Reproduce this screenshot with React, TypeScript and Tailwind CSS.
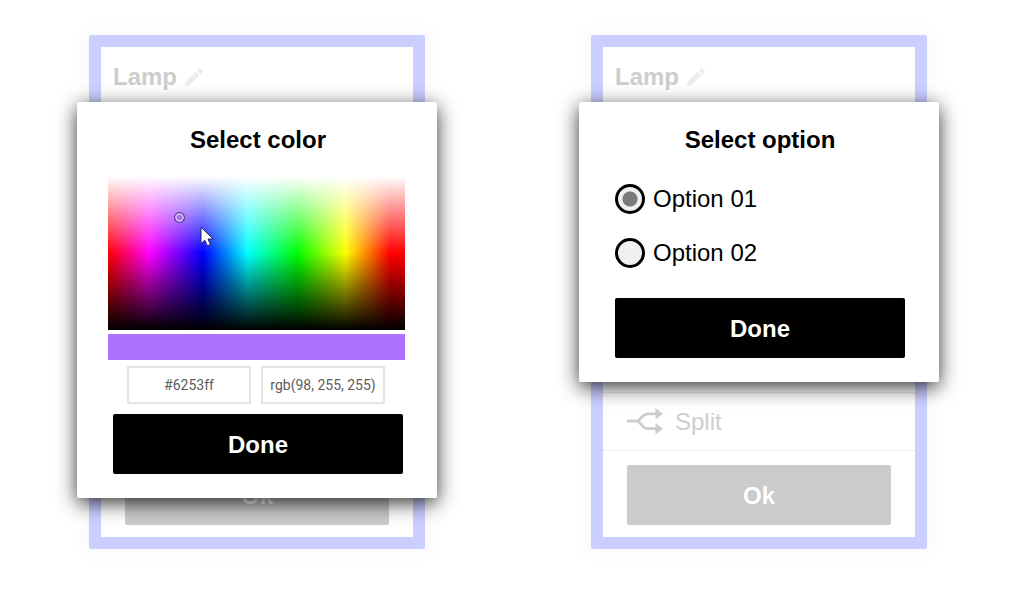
import { useState } from "react";
import type { ReactNode } from "react";

function PencilIcon() {
  return (
    <svg className="size-[18px]" viewBox="0 0 18 18" aria-hidden="true" fill="currentColor">
      <path d="M0.2 17.8V14.2L10.8 3.6L14.4 7.2L3.8 17.8Z" />
      <path d="M11.8 2.6L14 0.5Q14.7 -0.1 15.4 0.5L17.5 2.6Q18.1 3.3 17.5 4L15.4 6.2Z" />
    </svg>
  );
}

function SplitIcon() {
  return (
    <svg className="h-[27px] w-9 shrink-0" viewBox="0 0 36 27" aria-hidden="true">
      <path
        d="M0 13H11M10.5 13C14 11.5 15.5 5.8 21 5.8H30M10.5 13C14 14.5 15.5 20.7 21 20.7H30"
        fill="none"
        stroke="currentColor"
        strokeWidth="2.8"
      />
      <path d="M28.5 0L36 5.8L28.5 11.6ZM28.5 14.9L36 20.7L28.5 26.5Z" fill="currentColor" />
    </svg>
  );
}

function Cursor() {
  return (
    <svg className="absolute top-[50px] left-[92px] h-[21px] w-[14px]" viewBox="0 0 14 21" aria-hidden="true">
      <path
        d="M1 1.2V17.6L4.8 14.2L7.4 19.8L10.4 18.5L8 13H13.2Z"
        fill="#fff"
        stroke="#24244e"
        strokeWidth="1"
        strokeLinejoin="round"
      />
    </svg>
  );
}

function LampCard({ children, split = false }: { children: ReactNode; split?: boolean }) {
  return (
    <section className="relative flex min-h-[514px] w-[336px] flex-col rounded-xs border-12 border-[#cbcfff] bg-white shadow-[0_0_16px_8px_rgba(0,0,0,0.02)]">
      <header className="flex items-center gap-2 px-3 pt-4">
        <h1 className="text-[24px] leading-7 font-bold text-[#cdcdcd]">Lamp</h1>
        <button type="button" aria-label="Edit name" className="text-[#ececec]">
          <PencilIcon />
        </button>
      </header>
      <div className="mt-auto">
        {split && (
          <div className="flex h-[59px] items-center gap-3 border-y border-dotted border-[#dcdcdc] px-6 text-[24px] leading-7 text-[#cdcdcd]">
            <SplitIcon />
            Split
          </div>
        )}
        <div className="px-6 pt-3.5 pb-3">
          <button type="button" className="h-15 w-full rounded-xs bg-[#cbcbcb] pt-0.5 text-[24px] font-bold text-white">
            Ok
          </button>
        </div>
      </div>
      {children}
    </section>
  );
}

function Dialog({ title, children }: { title: string; children: ReactNode }) {
  return (
    <div
      role="dialog"
      aria-label={title}
      className="absolute top-[55px] -right-6 -left-6 rounded-xs bg-white py-6 pr-[34px] pl-9 shadow-[0_5px_20px_rgba(0,0,0,0.8)]"
    >
      <h2 className="text-center text-[24px] leading-7 font-bold text-black">{title}</h2>
      {children}
    </div>
  );
}

function DoneButton() {
  return (
    <button type="button" className="block h-15 w-full rounded-xs bg-black pt-0.5 text-[24px] font-bold text-white">
      Done
    </button>
  );
}

const fieldClass =
  "h-[38px] w-[124px] min-w-0 border-2 border-[#e4e4e4] bg-white text-center font-[Roboto,sans-serif] text-[14px] text-[#5c5c5c]";

function ColorDialog() {
  const [hex, setHex] = useState("#6253ff");
  const [rgb, setRgb] = useState("rgb(98, 255, 255)");
  return (
    <Dialog title="Select color">
      <div className="-mr-0.5 -ml-[5px] pt-[22px]">
        <div className="relative h-[154px] bg-[linear-gradient(to_bottom,#fff,rgba(255,255,255,0)_50%,rgba(0,0,0,0)_50%,#000),linear-gradient(to_right,#f00,#f0f_14%,#00f_32%,#0ff_47%,#0f0_64%,#ff0_80%,#f00_95%)]">
          <svg className="absolute top-9 left-[66px] size-[11px]" viewBox="0 0 11 11" aria-hidden="true">
            <circle cx="5.5" cy="5.5" r="4.8" fill="none" stroke="#4b3a78" strokeWidth="1.2" />
            <circle cx="5.5" cy="5.5" r="3.5" fill="#a86cff" stroke="#d8c8ef" strokeWidth="1.4" />
          </svg>
          <Cursor />
        </div>
        <div className="mt-1 h-[26px] bg-[#ad73ff]" />
      </div>
      <div className="mt-1.5 mb-2.5 flex gap-2.5 pl-3.5">
        <input aria-label="Hex value" className={fieldClass} value={hex} onChange={(e) => setHex(e.target.value)} />
        <input aria-label="RGB value" className={fieldClass} value={rgb} onChange={(e) => setRgb(e.target.value)} />
      </div>
      <DoneButton />
    </Dialog>
  );
}

function OptionDialog() {
  const [selected, setSelected] = useState("Option 01");
  return (
    <Dialog title="Select option">
      <div className="flex flex-col gap-6 py-[30px]">
        {["Option 01", "Option 02"].map((option) => (
          <label key={option} className="flex h-[30px] items-center gap-2 text-[24px] leading-7 text-black">
            <input
              type="radio"
              name="option"
              checked={selected === option}
              onChange={() => setSelected(option)}
              className="size-[30px] appearance-none rounded-full border-3 border-black bg-[#f0f0f0] checked:bg-[radial-gradient(circle,#7b7b7b_7px,#f0f0f0_8px)]"
            />
            {option}
          </label>
        ))}
      </div>
      <DoneButton />
    </Dialog>
  );
}

export default function App() {
  return (
    <main className="flex min-h-screen items-start justify-center gap-[166px] bg-white pt-[35px] pl-[5px] font-['Liberation_Sans',Arial,sans-serif]">
      <LampCard>
        <ColorDialog />
      </LampCard>
      <LampCard split>
        <OptionDialog />
      </LampCard>
    </main>
  );
}
